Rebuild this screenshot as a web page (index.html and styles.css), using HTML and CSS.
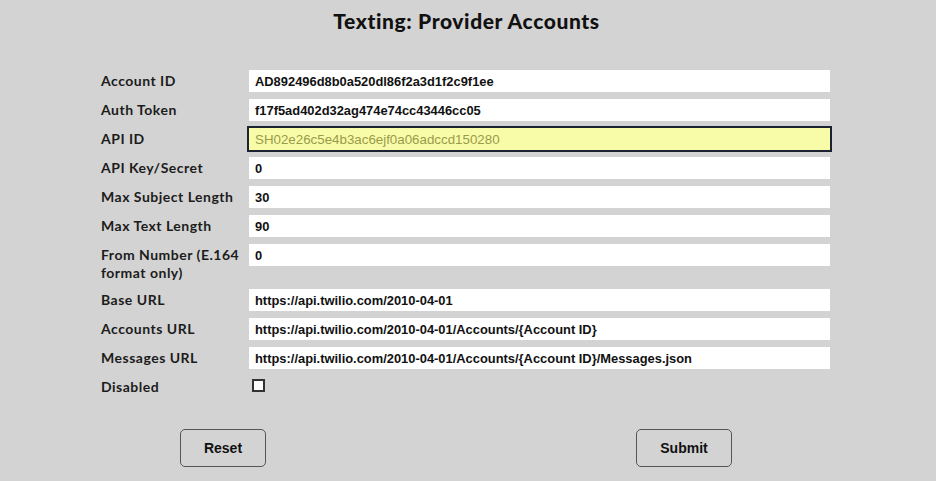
FILE: index.html
```html
<!DOCTYPE html>
<html>
<head>
<meta charset="utf-8">
<link rel="stylesheet" href="styles.css">
</head>
<body>
<h1 class="title">Texting: Provider Accounts</h1>
<form class="form">
  <div class="row"><label class="lbl">Account ID</label><input class="fld" type="text" value="AD892496d8b0a520dl86f2a3d1f2c9f1ee"></div>
  <div class="row"><label class="lbl">Auth Token</label><input class="fld" type="text" value="f17f5ad402d32ag474e74cc43446cc05"></div>
  <div class="row"><label class="lbl">API ID</label><input class="fld focus" type="text" placeholder="SH02e26c5e4b3ac6ejf0a06adccd150280"></div>
  <div class="row"><label class="lbl">API Key/Secret</label><input class="fld" type="text" value="0"></div>
  <div class="row"><label class="lbl">Max Subject Length</label><input class="fld" type="text" value="30"></div>
  <div class="row"><label class="lbl">Max Text Length</label><input class="fld" type="text" value="90"></div>
  <div class="row"><label class="lbl">From Number (E.164 format only)</label><input class="fld" type="text" value="0"></div>
  <div class="row"><label class="lbl">Base URL</label><input class="fld" type="text" value="https://api.twilio.com/2010-04-01"></div>
  <div class="row"><label class="lbl">Accounts URL</label><input class="fld" type="text" value="https://api.twilio.com/2010-04-01/Accounts/{Account ID}"></div>
  <div class="row"><label class="lbl">Messages URL</label><input class="fld" type="text" value="https://api.twilio.com/2010-04-01/Accounts/{Account ID}/Messages.json"></div>
  <div class="row"><label class="lbl">Disabled</label><input class="chk" type="checkbox"></div>
</form>
<div class="actions">
  <button class="btn btn-reset" type="button">Reset</button>
  <button class="btn btn-submit" type="button">Submit</button>
</div>
</body>
</html>
```
FILE: styles.css
```css
html, body {
  margin: 0;
  padding: 0;
  background: #d3d3d3;
}
body {
  width: 936px;
  height: 481px;
  overflow: hidden;
  font-family: "Lato", "Liberation Sans", sans-serif;
  color: #1a1a1a;
}
.title {
  margin: 0 0 0 -3px;
  padding-top: 8px;
  height: 31px;
  text-align: center;
  font-size: 21px;
  font-weight: 900;
  letter-spacing: 0.6px;
  line-height: 26px;
  color: #111;
}
.form {
  margin: 31px 0 0 101px;
  width: 729px;
  display: flex;
  flex-direction: column;
  gap: 7px;
}
.row {
  display: flex;
  align-items: flex-start;
}
.lbl {
  width: 148px;
  flex: 0 0 148px;
  padding-top: 2px;
  padding-right: 4px;
  box-sizing: border-box;
  font-size: 14px;
  font-weight: 700;
  letter-spacing: 0.5px;
  line-height: 18px;
  color: #1c1c1c;
}
.fld {
  flex: 0 0 581px;
  width: 581px;
  height: 22px;
  box-sizing: border-box;
  border: 0;
  margin: 0;
  padding: 0 6px;
  background: #fff;
  font-family: "Liberation Sans", Arial, sans-serif;
  font-size: 12.9px;
  font-weight: 700;
  color: #111;
  outline: none;
}
.fld.focus {
  background: #f8fca8;
  outline: 2px solid #1b2230;
}
.fld.focus::placeholder {
  color: #9a9a48;
  font-size: 13.33px;
  font-weight: 400;
}
.chk {
  appearance: none;
  -webkit-appearance: none;
  width: 13px;
  height: 13px;
  margin: 3px 0 0 3px;
  box-sizing: border-box;
  border: 2px solid #333;
  background: #fff;
}
.actions {
  display: flex;
  gap: 370px;
  margin: 33px 0 0 180px;
}
.btn {
  height: 38px;
  box-sizing: border-box;
  border: 1px solid #555;
  border-radius: 5px;
  background: #d3d3d3;
  font-family: "Liberation Sans", Arial, sans-serif;
  font-size: 14px;
  font-weight: 700;
  color: #111;
  padding: 0;
}
.btn-reset { width: 86px; }
.btn-submit { width: 96px; }
```
